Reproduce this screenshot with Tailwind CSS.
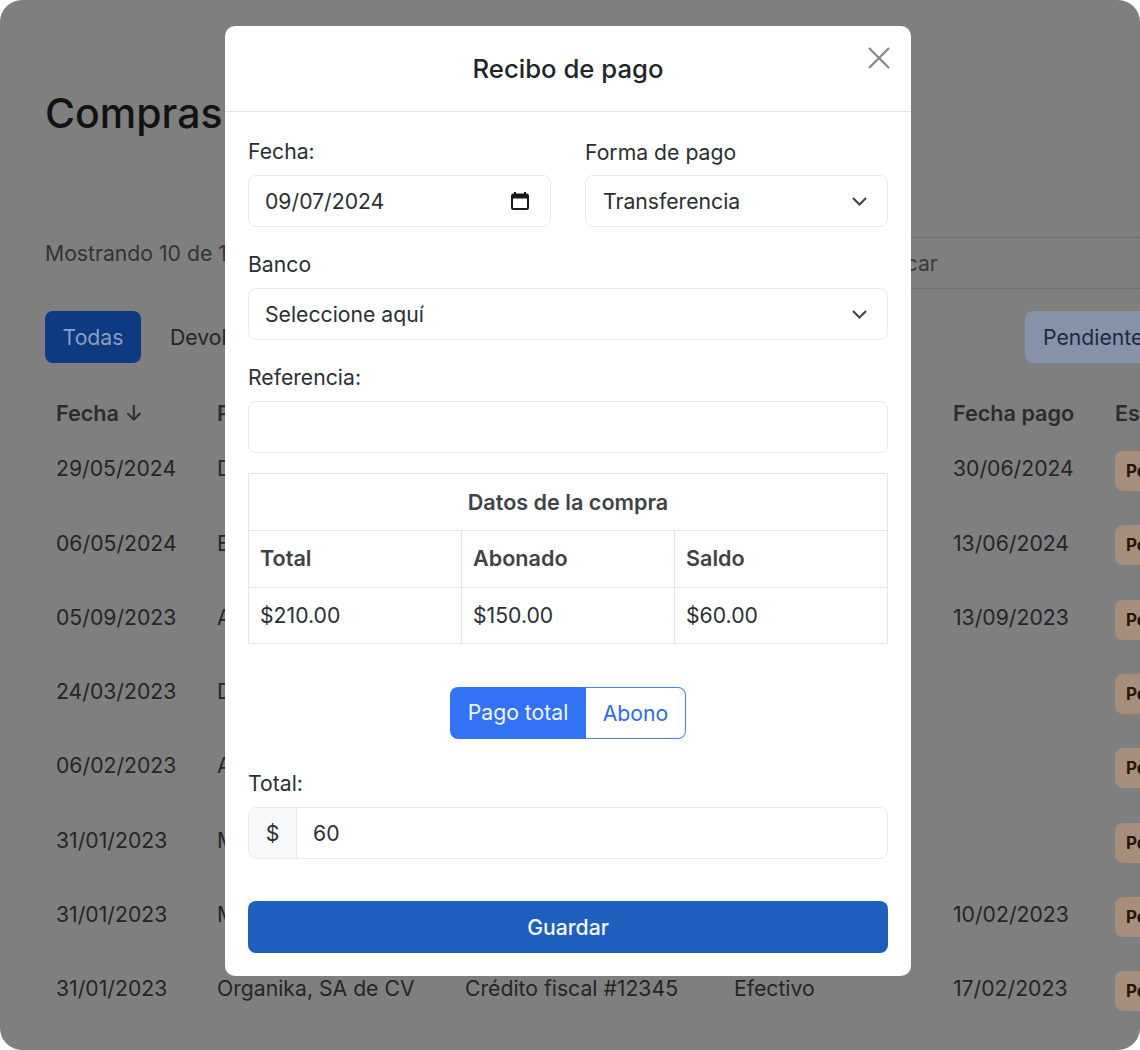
<!DOCTYPE html>
<html>
<head>
	<meta charset="utf-8">
	<title>Compras</title>
	<script src="https://cdn.jsdelivr.net/npm/@tailwindcss/browser@4"></script>
</head>
<body class="bg-white overflow-hidden font-['Inter',sans-serif] text-[21.2px]">
	<div class="relative w-[1140px] h-[1050px] overflow-hidden">
		<!-- page behind the modal -->
		<div class="h-full bg-[#7f7f80] rounded-[22px] overflow-hidden pl-[45px] text-[#252526]">
			<h1 class="pt-[82px] h-[237px] text-[41px] leading-[62px] font-medium text-[#121213]">Compras</h1>
			<div class="flex h-[52px] w-[1095px] overflow-hidden">
				<div class="w-[805px] pt-[3px] leading-[26px] text-[#333334]">Mostrando 10 de 120 registros</div>
				<div class="w-[290px] border-y border-[#6e6e6f] pl-[18px] leading-[50px] text-[#3a3a3b]">Buscar</div>
			</div>
			<div class="flex mt-[22px] h-[52px] w-[1095px] overflow-hidden leading-[52px]">
				<div class="w-[96px] rounded-lg bg-[#0d3a80] text-center text-[#8a9fc0]">Todas</div>
				<div class="w-[884px] pl-[29px]">Devoluciones</div>
				<div class="w-[115px] rounded-l-lg bg-[#8692a8] pl-[18px] text-[#1c2a44]">Pendiente</div>
			</div>
			<div class="grid grid-cols-[161px_248px_269px_219px_162px_200px] w-[1300px] mt-[34px] h-[32px] pl-[11px] text-[21.6px] font-semibold leading-[32px] text-[#2c2c2d]">
				<div>Fecha <span class="font-medium">↓</span></div><div>Proveedor</div><div>Documento</div><div>Forma</div><div>Fecha pago</div><div>Estado</div>
			</div>
			<div class="w-[1300px] mt-[3px]">
				<div class="grid grid-cols-[161px_248px_269px_219px_162px_200px] h-[74.3px] pl-[11px] items-center"><div>29/05/2024</div><div>Distribuidora</div><div></div><div></div><div>30/06/2024</div><div class="mt-[4px]"><span class="block w-[120px] h-[40px] rounded-lg bg-[#a58e7c] pl-[11px] text-[17px] leading-[40px] font-bold text-[#24170e]">Pendiente</span></div></div>
				<div class="grid grid-cols-[161px_248px_269px_219px_162px_200px] h-[74.3px] pl-[11px] items-center"><div>06/05/2024</div><div>El Centro</div><div></div><div></div><div>13/06/2024</div><div class="mt-[4px]"><span class="block w-[120px] h-[40px] rounded-lg bg-[#a58e7c] pl-[11px] text-[17px] leading-[40px] font-bold text-[#24170e]">Pendiente</span></div></div>
				<div class="grid grid-cols-[161px_248px_269px_219px_162px_200px] h-[74.3px] pl-[11px] items-center"><div>05/09/2023</div><div>Agrosal</div><div></div><div></div><div>13/09/2023</div><div class="mt-[4px]"><span class="block w-[120px] h-[40px] rounded-lg bg-[#a58e7c] pl-[11px] text-[17px] leading-[40px] font-bold text-[#24170e]">Pendiente</span></div></div>
				<div class="grid grid-cols-[161px_248px_269px_219px_162px_200px] h-[74.3px] pl-[11px] items-center"><div>24/03/2023</div><div>Distribuidora</div><div></div><div></div><div></div><div class="mt-[4px]"><span class="block w-[120px] h-[40px] rounded-lg bg-[#a58e7c] pl-[11px] text-[17px] leading-[40px] font-bold text-[#24170e]">Pendiente</span></div></div>
				<div class="grid grid-cols-[161px_248px_269px_219px_162px_200px] h-[74.3px] pl-[11px] items-center"><div>06/02/2023</div><div>Agrosal</div><div></div><div></div><div></div><div class="mt-[4px]"><span class="block w-[120px] h-[40px] rounded-lg bg-[#a58e7c] pl-[11px] text-[17px] leading-[40px] font-bold text-[#24170e]">Pendiente</span></div></div>
				<div class="grid grid-cols-[161px_248px_269px_219px_162px_200px] h-[74.3px] pl-[11px] items-center"><div>31/01/2023</div><div>Mercado</div><div></div><div></div><div></div><div class="mt-[4px]"><span class="block w-[120px] h-[40px] rounded-lg bg-[#a58e7c] pl-[11px] text-[17px] leading-[40px] font-bold text-[#24170e]">Pendiente</span></div></div>
				<div class="grid grid-cols-[161px_248px_269px_219px_162px_200px] h-[74.3px] pl-[11px] items-center"><div>31/01/2023</div><div>Mercado</div><div></div><div></div><div>10/02/2023</div><div class="mt-[4px]"><span class="block w-[120px] h-[40px] rounded-lg bg-[#a58e7c] pl-[11px] text-[17px] leading-[40px] font-bold text-[#24170e]">Pendiente</span></div></div>
				<div class="grid grid-cols-[161px_248px_269px_219px_162px_200px] h-[74.3px] pl-[11px] items-center"><div>31/01/2023</div><div>Organika, SA de CV</div><div>Crédito fiscal #12345</div><div>Efectivo</div><div>17/02/2023</div><div class="mt-[4px]"><span class="block w-[120px] h-[40px] rounded-lg bg-[#a58e7c] pl-[11px] text-[17px] leading-[40px] font-bold text-[#24170e]">Pendiente</span></div></div>
			</div>
		</div>

		<!-- modal -->
		<div class="absolute left-[225px] top-[26px] w-[686px] h-[950px] bg-white rounded-[10px] text-[#2b2f33]">
			<div class="relative h-[86px] border-b border-[#e4e5e7] text-center text-[25.7px] leading-[85px] font-medium text-[#212529]">
				Recibo de pago
				<svg class="absolute right-[20px] top-[20px]" width="24" height="24" viewBox="0 0 24 24" fill="none" stroke="#858585" stroke-width="2.2"><path d="M2 2 L22 22 M22 2 L2 22"/></svg>
			</div>
			<div class="px-[23px] pt-[23px]">
				<div class="grid grid-cols-2 gap-x-[34px]">
					<div>
						<div class="h-[32px] mb-[8px] leading-[32px]">Fecha:</div>
						<div class="flex items-center justify-between h-[52px] pl-[16px] pr-[21px] border border-[#e8e9eb] rounded-lg">
							<span class="pt-[2px]">09/07/2024</span>
							<svg width="18" height="18" viewBox="0 0 18 18" fill="none"><path d="M4 0v3M14 0v3" stroke="#1a1a1a" stroke-width="2"/><rect x="1" y="2.5" width="16" height="14.5" rx="1.5" stroke="#1a1a1a" stroke-width="2"/><rect x="1" y="2.5" width="16" height="4" fill="#1a1a1a"/></svg>
						</div>
					</div>
					<div>
						<div class="h-[32px] mb-[8px] leading-[34px]">Forma de pago</div>
						<div class="flex items-center justify-between h-[52px] pl-[17px] pr-[20px] border border-[#e8e9eb] rounded-lg">
							<span class="pt-[2px]">Transferencia</span>
							<svg width="15" height="9" viewBox="0 0 15 9" fill="none" stroke="#3d4145" stroke-width="2"><path d="M1 1l6.5 6.5L14 1"/></svg>
						</div>
					</div>
				</div>
				<div class="mt-[21px] h-[32px] mb-[8px] leading-[32px]">Banco</div>
				<div class="flex items-center justify-between h-[52px] pl-[16px] pr-[20px] border border-[#e8e9eb] rounded-lg">
					<span class="pt-[2px]">Seleccione aquí</span>
					<svg width="15" height="9" viewBox="0 0 15 9" fill="none" stroke="#3d4145" stroke-width="2"><path d="M1 1l6.5 6.5L14 1"/></svg>
				</div>
				<div class="mt-[21px] h-[32px] mb-[8px] leading-[32px]">Referencia:</div>
				<div class="h-[52px] border border-[#e8e9eb] rounded-lg"></div>

				<div class="mt-[20px] border border-[#e3e5e8]">
					<div class="h-[57px] border-b border-[#e3e5e8] text-center text-[21.6px] font-semibold leading-[56px] text-[#3f4347]">Datos de la compra</div>
					<div class="grid grid-cols-[212px_213px_1fr] h-[57px] border-b border-[#e3e5e8] text-[21.6px] font-semibold leading-[54px] text-[#3f4347]">
						<div class="pl-[11px]">Total</div>
						<div class="pl-[11px] border-l border-[#e3e5e8]">Abonado</div>
						<div class="pl-[11px] border-l border-[#e3e5e8]">Saldo</div>
					</div>
					<div class="grid grid-cols-[212px_213px_1fr] h-[55px] leading-[54px]">
						<div class="pl-[11px]">$210.00</div>
						<div class="pl-[11px] border-l border-[#e3e5e8]">$150.00</div>
						<div class="pl-[11px] border-l border-[#e3e5e8]">$60.00</div>
					</div>
				</div>

				<div class="flex justify-center mt-[43px] h-[52px] leading-[51px]">
					<div class="w-[136px] rounded-l-lg bg-[#3273f6] text-center text-[#f2f6ff]">Pago total</div>
					<div class="w-[100px] rounded-r-lg border border-[#4a80e8] border-l-0 text-center text-[#2f6be0]">Abono</div>
				</div>

				<div class="mt-[28px] h-[32px] mb-[8px] leading-[32px]">Total:</div>
				<div class="flex h-[52px] border border-[#e8e9eb] rounded-lg overflow-hidden leading-[51px]">
					<div class="w-[48px] bg-[#f7f8f9] border-r border-[#e8e9eb] text-center">$</div>
					<div class="pl-[16px]">60</div>
				</div>

				<div class="mt-[42px] h-[52px] rounded-lg bg-[#1f5fbf] text-center font-medium leading-[53px] text-[#f3f6fb]">Guardar</div>
			</div>
		</div>
	</div>
</body>
</html>
